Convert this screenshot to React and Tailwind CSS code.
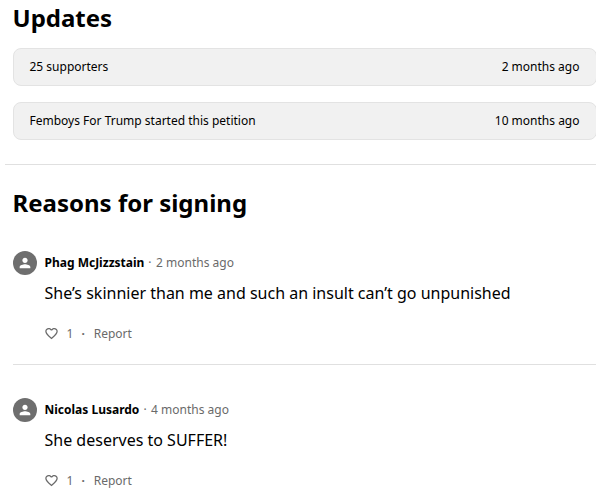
import React from 'react';

const updates = [
  { text: '25 supporters', time: '2 months ago' },
  { text: 'Femboys For Trump started this petition', time: '10 months ago' },
];

const reasons = [
  {
    name: 'Phag McJizzstain',
    time: '2 months ago',
    comment: 'She’s skinnier than me and such an insult can’t go unpunished',
    likes: 1,
  },
  {
    name: 'Nicolas Lusardo',
    time: '4 months ago',
    comment: 'She deserves to SUFFER!',
    likes: 1,
  },
];

const Avatar = () => (
  <div className="w-6 h-6 shrink-0 rounded-full bg-[#6e6e6e] flex items-center justify-center">
    <svg viewBox="0 0 24 24" className="w-4 h-4 fill-white">
      <path d="M12 12c2.21 0 4-1.79 4-4s-1.79-4-4-4-4 1.79-4 4 1.79 4 4 4zm0 2c-2.67 0-8 1.34-8 4v2h16v-2c0-2.66-5.33-4-8-4z" />
    </svg>
  </div>
);

const HeartIcon = () => (
  <svg viewBox="0 0 24 24" className="w-[15px] h-[15px] -ml-[0.5px] mb-px fill-[#6a6a6a]">
    <path d="M16.5 3c-1.74 0-3.41.81-4.5 2.09C10.91 3.81 9.24 3 7.5 3 4.42 3 2 5.42 2 8.5c0 3.78 3.4 6.86 8.55 11.54L12 21.35l1.45-1.32C18.6 15.36 22 12.28 22 8.5 22 5.42 19.58 3 16.5 3zm-4.4 15.55l-.1.1-.1-.1C7.14 14.24 4 11.39 4 8.5 4 6.5 5.5 5 7.5 5c1.54 0 3.04.99 3.57 2.36h1.87C13.46 5.99 14.96 5 16.5 5c2 0 3.5 1.5 3.5 3.5 0 2.89-3.14 5.74-7.9 10.05z" />
  </svg>
);

const Reason = ({ name, time, comment, likes }) => (
  <div className="flex gap-2 h-[147px]">
    <Avatar />
    <div className="min-w-0">
      <div className="flex items-center h-6 text-[12px] text-[#6a6a6a]">
        <span className="font-bold text-black">{name}</span>
        <span className="ml-1 mr-[4.5px]">·</span>
        <span>{time}</span>
      </div>
      <p className="mt-1.5 text-base leading-6 text-black whitespace-nowrap">{comment}</p>
      <div className="mt-[17px] flex items-center h-6 text-[12px] text-[#6a6a6a]">
        <HeartIcon />
        <span className="ml-[7.5px]">{likes}</span>
        <span className="mx-2 font-bold">·</span>
        <span className="ml-px">Report</span>
      </div>
    </div>
  </div>
);

const App = () => {
  return (
    <div className="h-[492px] overflow-hidden bg-white text-black font-['Noto_Sans',sans-serif]">
      <section className="pl-[12.5px]">
        <h2 className="pt-0.5 text-2xl leading-8 font-bold">Updates</h2>
        <div className="mt-3.5 -mr-px flex flex-col gap-4">
          {updates.map((item) => (
            <div
              key={item.text}
              className="h-[38px] pl-4 pr-[16.5px] flex items-center justify-between rounded-lg border border-[#e3e3e3] bg-[#f1f1f1] text-[12px]"
            >
              <span>{item.text}</span>
              <span>{item.time}</span>
            </div>
          ))}
        </div>
      </section>

      <hr className="mt-6 ml-[5px] border-[#e0e0e0]" />

      <section className="pl-[12.5px]">
        <h2 className="mt-[22px] text-2xl leading-8 font-bold">Reasons for signing</h2>
        <div className="mt-8">
          {reasons.map((item, index) => (
            <div key={item.name}>
              {index > 0 && <hr className="-mt-[34px] mb-[33px] border-[#e0e0e0]" />}
              <Reason {...item} />
            </div>
          ))}
        </div>
      </section>
    </div>
  );
};

export default App;
